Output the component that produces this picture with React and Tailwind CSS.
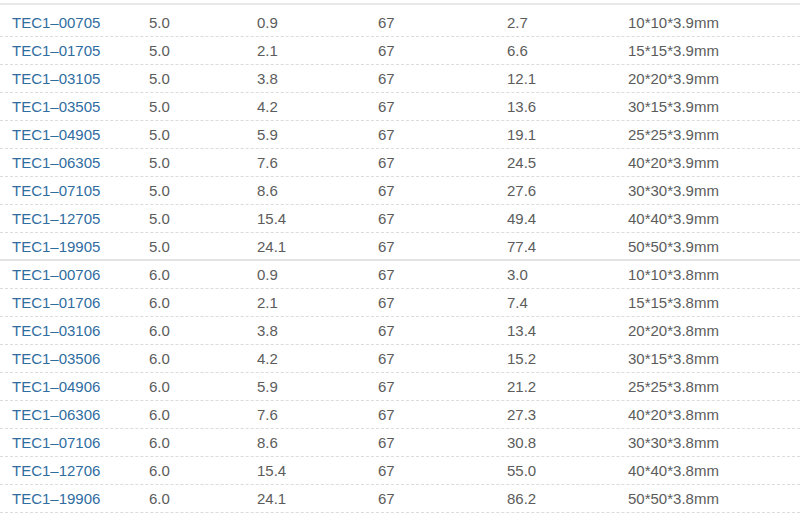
import React from "react";

const groups = [
  [
    ["TEC1–00705", "5.0", "0.9", "67", "2.7", "10*10*3.9mm"],
    ["TEC1–01705", "5.0", "2.1", "67", "6.6", "15*15*3.9mm"],
    ["TEC1–03105", "5.0", "3.8", "67", "12.1", "20*20*3.9mm"],
    ["TEC1–03505", "5.0", "4.2", "67", "13.6", "30*15*3.9mm"],
    ["TEC1–04905", "5.0", "5.9", "67", "19.1", "25*25*3.9mm"],
    ["TEC1–06305", "5.0", "7.6", "67", "24.5", "40*20*3.9mm"],
    ["TEC1–07105", "5.0", "8.6", "67", "27.6", "30*30*3.9mm"],
    ["TEC1–12705", "5.0", "15.4", "67", "49.4", "40*40*3.9mm"],
    ["TEC1–19905", "5.0", "24.1", "67", "77.4", "50*50*3.9mm"],
  ],
  [
    ["TEC1–00706", "6.0", "0.9", "67", "3.0", "10*10*3.8mm"],
    ["TEC1–01706", "6.0", "2.1", "67", "7.4", "15*15*3.8mm"],
    ["TEC1–03106", "6.0", "3.8", "67", "13.4", "20*20*3.8mm"],
    ["TEC1–03506", "6.0", "4.2", "67", "15.2", "30*15*3.8mm"],
    ["TEC1–04906", "6.0", "5.9", "67", "21.2", "25*25*3.8mm"],
    ["TEC1–06306", "6.0", "7.6", "67", "27.3", "40*20*3.8mm"],
    ["TEC1–07106", "6.0", "8.6", "67", "30.8", "30*30*3.8mm"],
    ["TEC1–12706", "6.0", "15.4", "67", "55.0", "40*40*3.8mm"],
    ["TEC1–19906", "6.0", "24.1", "67", "86.2", "50*50*3.8mm"],
  ],
];

const widths = ["w-[137px]", "w-[108px]", "w-[121px]", "w-[129px]", "w-[121px]", "flex-1"];

const Row = ({ cells, last }) => (
  <div
    className={
      "flex items-center h-[28px] " +
      (last ? "border-b-2 border-solid border-[#e3e3e3]" : "border-b border-dashed border-[#dcdcdc]")
    }
  >
    {cells.map((c, i) => (
      <div
        key={i}
        className={`${widths[i]} pl-3 ${i === 0 ? "text-[#306d9f]" : "text-[#5c5c5c]"}`}
      >
        {c}
      </div>
    ))}
  </div>
);

export default function App() {
  return (
    <div className="w-[800px] h-[513px] overflow-hidden bg-white pt-[3px] font-['Liberation_Sans',Arial,sans-serif] text-[15px] leading-none">
      <div className="h-[2px] bg-[#e8e8e8]" />
      <div className="h-[4px]" />
      {groups.map((g, gi) => (
        <div key={gi}>
          {g.map((r, ri) => (
            <Row key={ri} cells={r} last={gi === 0 && ri === g.length - 1} />
          ))}
        </div>
      ))}
    </div>
  );
}
